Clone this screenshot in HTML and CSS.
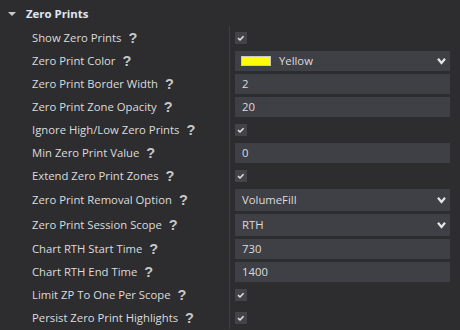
FILE: index.html
```html
<!DOCTYPE html>
<html lang="en">
<head>
  <meta charset="UTF-8" />
  <title>Zero Prints - Settings</title>
  <link rel="stylesheet" href="styles.css">
</head>
<body>

  <div class="group-head">
    <span class="caret"></span>
    <span class="group-title">Zero Prints</span>
  </div>

  <div class="props">
    <div class="row">
      <div class="name">Show Zero Prints <span class="help">?</span></div>
      <div class="value"><span class="check"><svg width="12" height="12" viewBox="0 0 12 12"><path d="M3 6.2 L5 8 L8.6 4.2" /></svg></span></div>
    </div>
    <div class="row">
      <div class="name">Zero Print Color <span class="help">?</span></div>
      <div class="value">
        <div class="box select">
          <span class="swatch"></span>
          <span class="text">Yellow</span>
          <svg class="chev" width="9" height="8" viewBox="0 0 9 8"><path d="M1 1.8 L4.5 6 L8 1.8" /></svg>
        </div>
      </div>
    </div>
    <div class="row">
      <div class="name">Zero Print Border Width <span class="help">?</span></div>
      <div class="value"><div class="box">2</div></div>
    </div>
    <div class="row">
      <div class="name">Zero Print Zone Opacity <span class="help">?</span></div>
      <div class="value"><div class="box">20</div></div>
    </div>
    <div class="row">
      <div class="name">Ignore High/Low Zero Prints <span class="help">?</span></div>
      <div class="value"><span class="check"><svg width="12" height="12" viewBox="0 0 12 12"><path d="M3 6.2 L5 8 L8.6 4.2" /></svg></span></div>
    </div>
    <div class="row">
      <div class="name">Min Zero Print Value <span class="help">?</span></div>
      <div class="value"><div class="box">0</div></div>
    </div>
    <div class="row">
      <div class="name">Extend Zero Print Zones <span class="help">?</span></div>
      <div class="value"><span class="check"><svg width="12" height="12" viewBox="0 0 12 12"><path d="M3 6.2 L5 8 L8.6 4.2" /></svg></span></div>
    </div>
    <div class="row tall">
      <div class="name">Zero Print Removal Option <span class="help">?</span></div>
      <div class="value">
        <div class="box select big">
          <span class="text">VolumeFill</span>
          <svg class="chev" width="9" height="8" viewBox="0 0 9 8"><path d="M1 1.8 L4.5 6 L8 1.8" /></svg>
        </div>
      </div>
    </div>
    <div class="row tall">
      <div class="name">Zero Print Session Scope <span class="help">?</span></div>
      <div class="value">
        <div class="box select big">
          <span class="text">RTH</span>
          <svg class="chev" width="9" height="8" viewBox="0 0 9 8"><path d="M1 1.8 L4.5 6 L8 1.8" /></svg>
        </div>
      </div>
    </div>
    <div class="row">
      <div class="name">Chart RTH Start Time <span class="help">?</span></div>
      <div class="value"><div class="box">730</div></div>
    </div>
    <div class="row">
      <div class="name">Chart RTH End Time <span class="help">?</span></div>
      <div class="value"><div class="box">1400</div></div>
    </div>
    <div class="row">
      <div class="name">Limit ZP To One Per Scope <span class="help">?</span></div>
      <div class="value"><span class="check"><svg width="12" height="12" viewBox="0 0 12 12"><path d="M3 6.2 L5 8 L8.6 4.2" /></svg></span></div>
    </div>
    <div class="row">
      <div class="name">Persist Zero Print Highlights <span class="help">?</span></div>
      <div class="value"><span class="check"><svg width="12" height="12" viewBox="0 0 12 12"><path d="M3 6.2 L5 8 L8.6 4.2" /></svg></span></div>
    </div>
  </div>

</body>
</html>
```

FILE: styles.css
```css
body {
  margin: 0;
  width: 460px;
  height: 330px;
  overflow: hidden;
  background-color: #2d2d30;
  font-family: 'Open Sans', sans-serif;
  font-size: 11.3px;
  color: #dcdcdc;
}

.group-head {
  height: 26px;
  display: flex;
  align-items: center;
  padding-left: 8px;
}

.caret {
  width: 0;
  height: 0;
  border-left: 4px solid transparent;
  border-right: 4px solid transparent;
  border-top: 4px solid #c8c8c8;
  margin-right: 10px;
  margin-top: 1px;
}

.group-title {
  font-weight: bold;
  font-size: 11.4px;
  color: #dde8f3;
}

.props {
  width: 450px;
}

.row {
  display: flex;
  height: 23px;
}

.row.tall {
  height: 25px;
}

.name {
  width: 229px;
  padding-left: 32px;
  box-sizing: border-box;
  display: flex;
  align-items: center;
  white-space: nowrap;
}

.help {
  display: inline-flex;
  align-items: center;
  margin-left: 7px;
  font-family: 'Liberation Sans', sans-serif;
  font-weight: bold;
  font-size: 14.5px;
  color: #c8c8c8;
  margin-top: 1px;
}

.value {
  flex: 1;
  border-left: 1px solid #3e3e42;
  padding-left: 5px;
  display: flex;
  align-items: center;
}

.check {
  width: 12px;
  height: 12px;
  background-color: #434348;
  display: flex;
}

.check path {
  fill: none;
  stroke: #e0e0e0;
  stroke-width: 1.6;
}

.box {
  width: 100%;
  height: 20px;
  background-color: #3f3f46;
  display: flex;
  align-items: center;
  padding-left: 7px;
  padding-right: 4px;
  box-sizing: border-box;
  color: #dcdcdc;
}

.box.big {
  height: 22px;
}

.select .text {
  flex: 1;
}

.swatch {
  width: 30px;
  height: 10px;
  box-sizing: border-box;
  background-color: #ffff00;
  border: 1px solid #c8c8c8;
  margin-left: -1px;
  margin-right: 8px;
}

.chev path {
  fill: none;
  stroke: #e6e6e6;
  stroke-width: 2.2;
}
```
